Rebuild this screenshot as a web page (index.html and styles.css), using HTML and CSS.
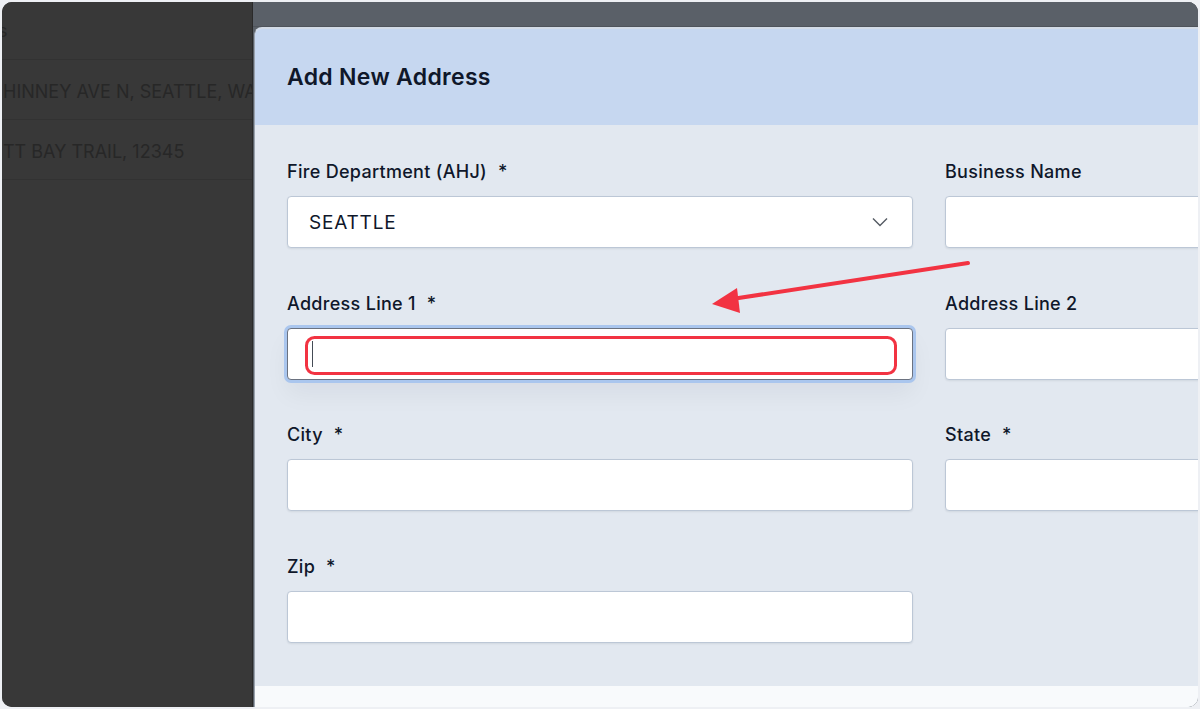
FILE: index.html
```html
<!DOCTYPE html>
<html lang="en">
  <head>
    <meta charset="UTF-8" />
    <meta name="viewport" content="width=device-width, initial-scale=1.0" />
    <title>Add New Address</title>
    <link rel="stylesheet" href="styles.css">
  </head>
  <body>
    <div class="screen">
      <!-- Table behind the modal (dimmed) -->
      <div class="backdrop-table">
        <div class="table-row table-head">s</div>
        <div class="table-row">HINNEY AVE N, SEATTLE, WA 98103</div>
        <div class="table-row">TT BAY TRAIL, 12345</div>
      </div>

      <div class="main">
        <div class="top-strip"></div>

        <!-- Modal -->
        <div class="modal">
          <div class="modal-header">
            <h2>Add New Address</h2>
          </div>

          <div class="modal-body">
            <div class="field">
              <label>Fire Department (AHJ)<span class="req">*</span></label>
              <div class="input select">
                <span class="value">SEATTLE</span>
                <svg class="chevron" width="16" height="10" viewBox="0 0 16 10">
                  <polyline points="1,1.5 8,8.5 15,1.5" fill="none" stroke="#555b63" stroke-width="1.4" />
                </svg>
              </div>
            </div>
            <div class="field">
              <label>Business Name</label>
              <div class="input"></div>
            </div>

            <div class="field">
              <label>Address Line 1<span class="req">*</span></label>
              <div class="input focused"><span class="caret"></span></div>
            </div>
            <div class="field">
              <label>Address Line 2</label>
              <div class="input"></div>
            </div>

            <div class="field">
              <label>City<span class="req">*</span></label>
              <div class="input"></div>
            </div>
            <div class="field">
              <label>State<span class="req">*</span></label>
              <div class="input"></div>
            </div>

            <div class="field">
              <label>Zip<span class="req">*</span></label>
              <div class="input"></div>
            </div>
          </div>

          <div class="modal-footer"></div>
        </div>
      </div>

      <!-- Annotation drawn over the screenshot -->
      <svg class="annotation" width="1196" height="705" viewBox="0 0 1196 705">
        <rect x="304.5" y="335.5" width="589" height="36" rx="8" fill="none" stroke="#f23342" stroke-width="3" />
        <line x1="966" y1="261" x2="730" y2="297" stroke="#f23342" stroke-width="4" stroke-linecap="round" />
        <polygon points="710,302 735,286 738,311" fill="#f23342" />
      </svg>
    </div>
  </body>
</html>
```

FILE: styles.css
```css
/* Global */
body {
  margin: 0;
  padding: 2px;
  background-color: #eef0f4;
  font-family: Inter, "Noto Sans", sans-serif;
  color: #0f172a;
}

/* Screenshot frame */
.screen {
  position: relative;
  display: flex;
  width: 1196px;
  height: 705px;
  border-radius: 10px;
  overflow: hidden;
  background-color: #383838;
}

/* Dimmed table on the left */
.backdrop-table {
  width: 250px;
  flex-shrink: 0;
  background-color: #383838;
  overflow: hidden;
}

.table-row {
  display: flex;
  align-items: center;
  box-sizing: border-box;
  height: 60px;
  padding-left: 1px;
  padding-top: 3px;
  border-bottom: 1px solid #323232;
  white-space: nowrap;
  font-size: 18px;
  color: #272727;
}

.table-head {
  height: 58px;
  padding-top: 0;
  padding-left: 0;
  margin-left: -4px;
}

/* Right side */
.main {
  flex: 1;
  display: flex;
  flex-direction: column;
  min-width: 0;
  background-color: #5a6068;
  border-left: 1px solid #2a2a2a;
}

.top-strip {
  height: 24px;
  flex-shrink: 0;
  background-color: #5a6068;
  border-bottom: 1px solid #4f545b;
}

/* Modal */
.modal {
  flex: 1;
  display: flex;
  flex-direction: column;
  width: 1605px;
  margin-left: 1px;
  border-top: 2px solid #d3dbe6;
  border-left: 1px solid #9aa2ad;
  border-top-left-radius: 8px;
  overflow: hidden;
  background-color: #e2e8f0;
}

.modal-header {
  height: 96px;
  flex-shrink: 0;
  display: flex;
  align-items: center;
  padding-left: 32px;
  background-color: #c6d7f0;
}

.modal-header h2 {
  margin: 0;
  font-size: 23px;
  font-weight: 600;
  letter-spacing: 0.3px;
  color: #0f172a;
}

.modal-body {
  display: grid;
  grid-template-columns: 626px 626px;
  column-gap: 32px;
  row-gap: 43.5px;
  padding: 35px 32px 43px;
  background-color: #e2e8f0;
}

.modal-footer {
  flex: 1;
  background-color: #f8fafc;
}

/* Form fields */
.field label {
  display: block;
  height: 24px;
  line-height: 24px;
  margin-bottom: 12px;
  font-size: 18px;
  font-weight: 500;
  letter-spacing: 0.3px;
  color: #0f172a;
}

.req {
  margin-left: 11px;
}

.input {
  position: relative;
  box-sizing: border-box;
  height: 52px;
  background-color: #ffffff;
  border: 1px solid #bcc7d6;
  border-radius: 4px;
  box-shadow: 0 1px 2px rgba(15, 23, 42, 0.08);
}

.select {
  display: flex;
  align-items: center;
  justify-content: space-between;
  padding: 0 24px 0 21px;
}

.select .value {
  font-size: 19px;
  letter-spacing: 0.8px;
  color: #0f172a;
}

.focused {
  border-color: #6b7280;
  box-shadow: 0 0 0 3px #aac6ee, 0 14px 24px rgba(15, 23, 42, 0.05);
}

.caret {
  position: absolute;
  left: 24px;
  top: 12px;
  width: 1px;
  height: 26px;
  background-color: #444b55;
}

/* Red annotation overlay */
.annotation {
  position: absolute;
  left: 0;
  top: 0;
  pointer-events: none;
}
```
